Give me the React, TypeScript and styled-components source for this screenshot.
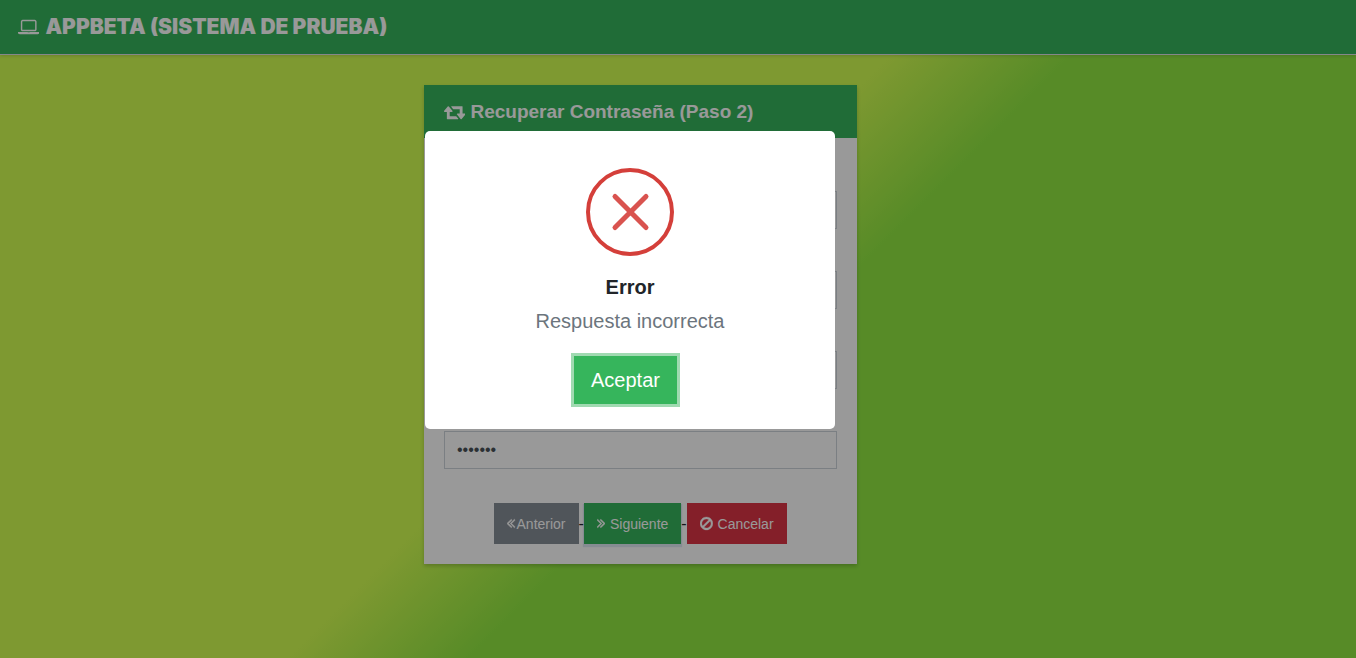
import React from 'react';
import styled, { createGlobalStyle } from 'styled-components';

const GlobalStyle = createGlobalStyle`
  *, *::before, *::after { box-sizing: border-box; }
  html, body { margin: 0; }
  body {
    font-family: Arial, "Liberation Sans", sans-serif;
    font-size: 16px;
    line-height: 24px;
    color: #212529;
  }
`;

const Page = styled.div`
  min-height: 100vh;
  background: linear-gradient(135deg, #d2ff52 47%, #91e842 56%);
`;

const Navbar = styled.header`
  display: flex;
  align-items: center;
  height: 55px;
  padding: 0 18px;
  background: #36b55c;
  border-bottom: 1px solid #dee2e6;
  box-shadow: 0 1px 3px rgba(0, 0, 0, 0.15);
`;

const Brand = styled.a`
  display: flex;
  align-items: center;
  gap: 6px;
  color: #fff;
  font-family: "Arial Black", Inter, sans-serif;
  font-size: 21px;
  font-weight: 900;
  text-decoration: none;
`;

const Icon = styled.svg<{ $height: number }>`
  display: block;
  flex: none;
  height: ${(p) => p.$height}px;
  fill: currentColor;
`;

const Main = styled.main`
  display: flex;
  justify-content: center;
  padding: 30px 75px 30px 0;
`;

const Card = styled.form`
  width: 433px;
  background: #fff;
  box-shadow: 0 2px 4px rgba(0, 0, 0, 0.2);
`;

const CardTitle = styled.h1`
  display: flex;
  align-items: center;
  gap: 5px;
  height: 53px;
  margin: 0;
  padding: 0 20px;
  background: #36b55c;
  color: #fff;
  font-size: 19px;
  font-weight: 700;
`;

const Fields = styled.div`
  display: grid;
  gap: 42px;
  padding: 53px 20px 34px;
`;

const Field = styled.input`
  width: 100%;
  height: 38px;
  padding: 6px 12px;
  border: 1px solid #ced4da;
  border-radius: 0;
  background: #fff;
  color: #495057;
  font: inherit;
`;

const Actions = styled.div`
  display: flex;
  justify-content: center;
  align-items: center;
  padding-bottom: 20px;
`;

const ActionButton = styled.button<{ $color: string; $gap?: number; $focused?: boolean }>`
  display: flex;
  align-items: center;
  gap: ${(p) => p.$gap ?? 5}px;
  height: 41px;
  padding: 0 13px;
  border: 0;
  background: ${(p) => p.$color};
  box-shadow: ${(p) => (p.$focused ? '0 2px 1px 1px rgba(0, 80, 160, 0.12)' : 'none')};
  color: #fff;
  font-family: inherit;
  font-size: 14px;
`;

const Overlay = styled.div`
  position: fixed;
  inset: 0;
  display: flex;
  align-items: center;
  justify-content: center;
  padding: 0 96px 98px 0;
  background: rgba(0, 0, 0, 0.4);
`;

const Dialog = styled.section`
  display: flex;
  flex-direction: column;
  align-items: center;
  width: 410px;
  padding: 37px 20px 22px;
  border-radius: 5px;
  background: #fff;
`;

const DialogTitle = styled.h2`
  margin: 16px 0 4px;
  font-size: 20px;
  line-height: 30px;
  font-weight: 700;
`;

const DialogText = styled.p`
  margin: 0 0 17px;
  color: #6c757d;
  font-size: 20px;
  line-height: 30px;
`;

const AcceptButton = styled.button`
  margin: 3px 9px 3px 0;
  height: 48px;
  padding: 0 17px;
  border: 0;
  background: #36b55c;
  box-shadow: 0 0 0 3px #a0dab1;
  color: #fff;
  font-family: inherit;
  font-size: 20px;
`;

const LaptopIcon = () => (
  <Icon $height={20} viewBox="0 0 1920 1792" aria-hidden="true">
    <path d="M416 1280q-66 0-113-47t-47-113v-704q0-66 47-113t113-47h1088q66 0 113 47t47 113v704q0 66-47 113t-113 47h-1088zm-32-864v704q0 13 9.5 22.5t22.5 9.5h1088q13 0 22.5-9.5t9.5-22.5v-704q0-13-9.5-22.5t-22.5-9.5h-1088q-13 0-22.5 9.5t-9.5 22.5zm1376 928h160v96q0 40-47 68t-113 28h-1600q-66 0-113-28t-47-68v-96h1760zm-720 96q16 0 16-16t-16-16h-160q-16 0-16 16t16 16h160z" />
  </Icon>
);

const RetweetIcon = () => (
  <Icon $height={20} viewBox="0 0 1920 1792" aria-hidden="true">
    <path d="M1280 1504q0 13-9.500 22.500t-22.500 9.500h-960q-8 0-13.500-2t-9-7-5.500-8-3-11.500-1-11.500v-600h-192q-26 0-45-19t-19-45q0-24 15-41l320-384q19-22 49-22t49 22l320 384q15 17 15 41 0 26-19 45t-45 19h-192v384h576q16 0 25 11l160 192q7 10 7 21zm640-416q0 20-15 41l-320 384q-20 23-49 23t-49-23l-320-384q-15-17-15-41 0-26 19-45t45-19h192v-384h-576q-16 0-25-12l-160-192q-7-9-7-20 0-13 9.500-22.500t22.500-9.500h960q8 0 13.500 2t9 7 5.500 8 3 11.500 1 11.500v600h192q26 0 45 19t19 45z" />
  </Icon>
);

const DoubleAngleIcon = ({ right = false }: { right?: boolean }) => (
  <Icon $height={15} viewBox="429 64 966 1792" aria-hidden="true">
    <path
      stroke="currentColor"
      strokeWidth="60"
      transform={right ? 'translate(1824 0) scale(-1 1)' : undefined}
      d="M1011 1376q0 13-10 23l-50 50q-10 10-23 10t-23-10l-466-466q-10-10-10-23t10-23l466-466q10-10 23-10t23 10l50 50q10 10 10 23t-10 23l-393 393 393 393q10 10 10 23zm384 0q0 13-10 23l-50 50q-10 10-23 10t-23-10l-466-466q-10-10-10-23t10-23l466-466q10-10 23-10t23 10l50 50q10 10 10 23t-10 23l-393 393 393 393q10 10 10 23z"
    />
  </Icon>
);

const BanIcon = () => (
  <Icon $height={15} viewBox="128 0 1536 1792" aria-hidden="true">
    <path
      stroke="currentColor"
      strokeWidth="40"
      d="M1440 893q0-161-87-295l-754 753q137 89 297 89 111 0 211.500-43.500t173.500-116.500 116-174.500 43-212.500zm-999 299l755-754q-135-91-300-91-148 0-273 73t-198 199-73 274q0 162 89 299zm1223-299q0 157-61 300t-163.500 246-245 164-298.500 61-298.500-61-245-164-163.500-246-61-300 61-299.500 163.500-245.500 245-164 298.500-61 298.500 61 245 164 163.500 245.500 61 299.500z"
    />
  </Icon>
);

const ErrorIcon = () => (
  <Icon $height={88} viewBox="0 0 88 88" aria-hidden="true">
    <circle cx="44" cy="44" r="42" fill="none" stroke="#d43f3a" strokeWidth="4" />
    <path d="M29 28.500l31 31M60 28.500l-31 31" stroke="#d9534f" strokeWidth="5" strokeLinecap="round" />
  </Icon>
);

export default function App() {
  return (
    <Page>
      <GlobalStyle />
      <Navbar>
        <Brand href="#">
          <LaptopIcon />
          APPBETA (SISTEMA DE PRUEBA)
        </Brand>
      </Navbar>
      <Main>
        <Card onSubmit={(e) => e.preventDefault()}>
          <CardTitle>
            <RetweetIcon />
            Recuperar Contraseña (Paso 2)
          </CardTitle>
          <Fields>
            <Field type="text" aria-label="Usuario" />
            <Field type="text" aria-label="Correo" />
            <Field type="text" aria-label="Pregunta" />
            <Field type="password" aria-label="Respuesta" defaultValue="secreto" />
          </Fields>
          <Actions>
            <ActionButton type="button" $color="#868e96" $gap={1}>
              <DoubleAngleIcon />
              Anterior
            </ActionButton>
            -
            <ActionButton type="submit" $color="#36b55c" $focused>
              <DoubleAngleIcon right />
              Siguiente
            </ActionButton>
            -
            <ActionButton type="button" $color="#dc3545">
              <BanIcon />
              Cancelar
            </ActionButton>
          </Actions>
        </Card>
      </Main>
      <Overlay>
        <Dialog role="alertdialog" aria-modal="true" aria-labelledby="dialog-title" aria-describedby="dialog-text">
          <ErrorIcon />
          <DialogTitle id="dialog-title">Error</DialogTitle>
          <DialogText id="dialog-text">Respuesta incorrecta</DialogText>
          <AcceptButton type="button">Aceptar</AcceptButton>
        </Dialog>
      </Overlay>
    </Page>
  );
}
